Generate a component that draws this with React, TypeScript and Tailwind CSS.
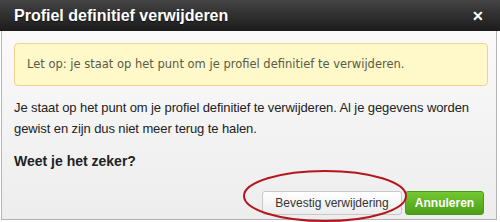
export default function App() {
  return (
    <div className="w-[500px] h-[222px] bg-white overflow-hidden" style={{ fontFamily: '"Liberation Sans", Arial, sans-serif' }}>
      <div className="h-[31px] bg-gradient-to-b from-[#444444] to-[#1c1c1c] flex items-center justify-between pl-[14px] pr-[16px]">
        <h1 className="text-white font-bold text-[16px] [text-shadow:0_1px_1px_rgba(0,0,0,0.6)]">Profiel definitief verwijderen</h1>
        <span className="text-white font-bold text-[14px] leading-none">✕</span>
      </div>
      <div className="relative h-[189px] ml-[1px] mr-[3px] border-x border-b border-[#b5b5b5] bg-gradient-to-b from-[#fafafa] to-[#ededed] pl-[12px] pr-[8px] pt-[12px]">
        <div className="h-[43px] flex items-center px-[12px] rounded-[4px] border border-[#f0d38c] bg-[#fff8c8] text-[#5a5a4a] text-[11.5px]" style={{ fontFamily: '"DejaVu Sans", Verdana, sans-serif' }}>
          Let op: je staat op het punt om je profiel definitief te verwijderen.
        </div>
        <p className="mt-[11px] text-[13px] leading-[21px] text-[#222] tracking-[-0.1px]">
          Je staat op het punt om je profiel definitief te verwijderen. Al je gegevens worden gewist en zijn dus niet meer terug te halen.
        </p>
        <p className="mt-[12px] text-[14px] font-bold text-[#222]">Weet je het zeker?</p>
        <div className="flex justify-end gap-[3px] mt-[19px] pr-[4px]">
          <button className="h-[24px] w-[140px] rounded-[3px] border border-[#c8c8c8] bg-gradient-to-b from-white to-[#ececec] text-[12px] text-[#333]">
            Bevestig verwijdering
          </button>
          <button className="h-[24px] w-[79px] rounded-[3px] border border-[#4a9a18] bg-gradient-to-b from-[#74c832] to-[#4c9f14] text-[12px] font-bold text-white">
            Annuleren
          </button>
        </div>
        <svg className="absolute left-[240px] top-[138px] pointer-events-none" width="166" height="54" viewBox="0 0 166 54">
          <ellipse cx="83" cy="27" rx="81" ry="25" fill="none" stroke="#b3161d" strokeWidth="2" />
        </svg>
      </div>
    </div>
  )
}
